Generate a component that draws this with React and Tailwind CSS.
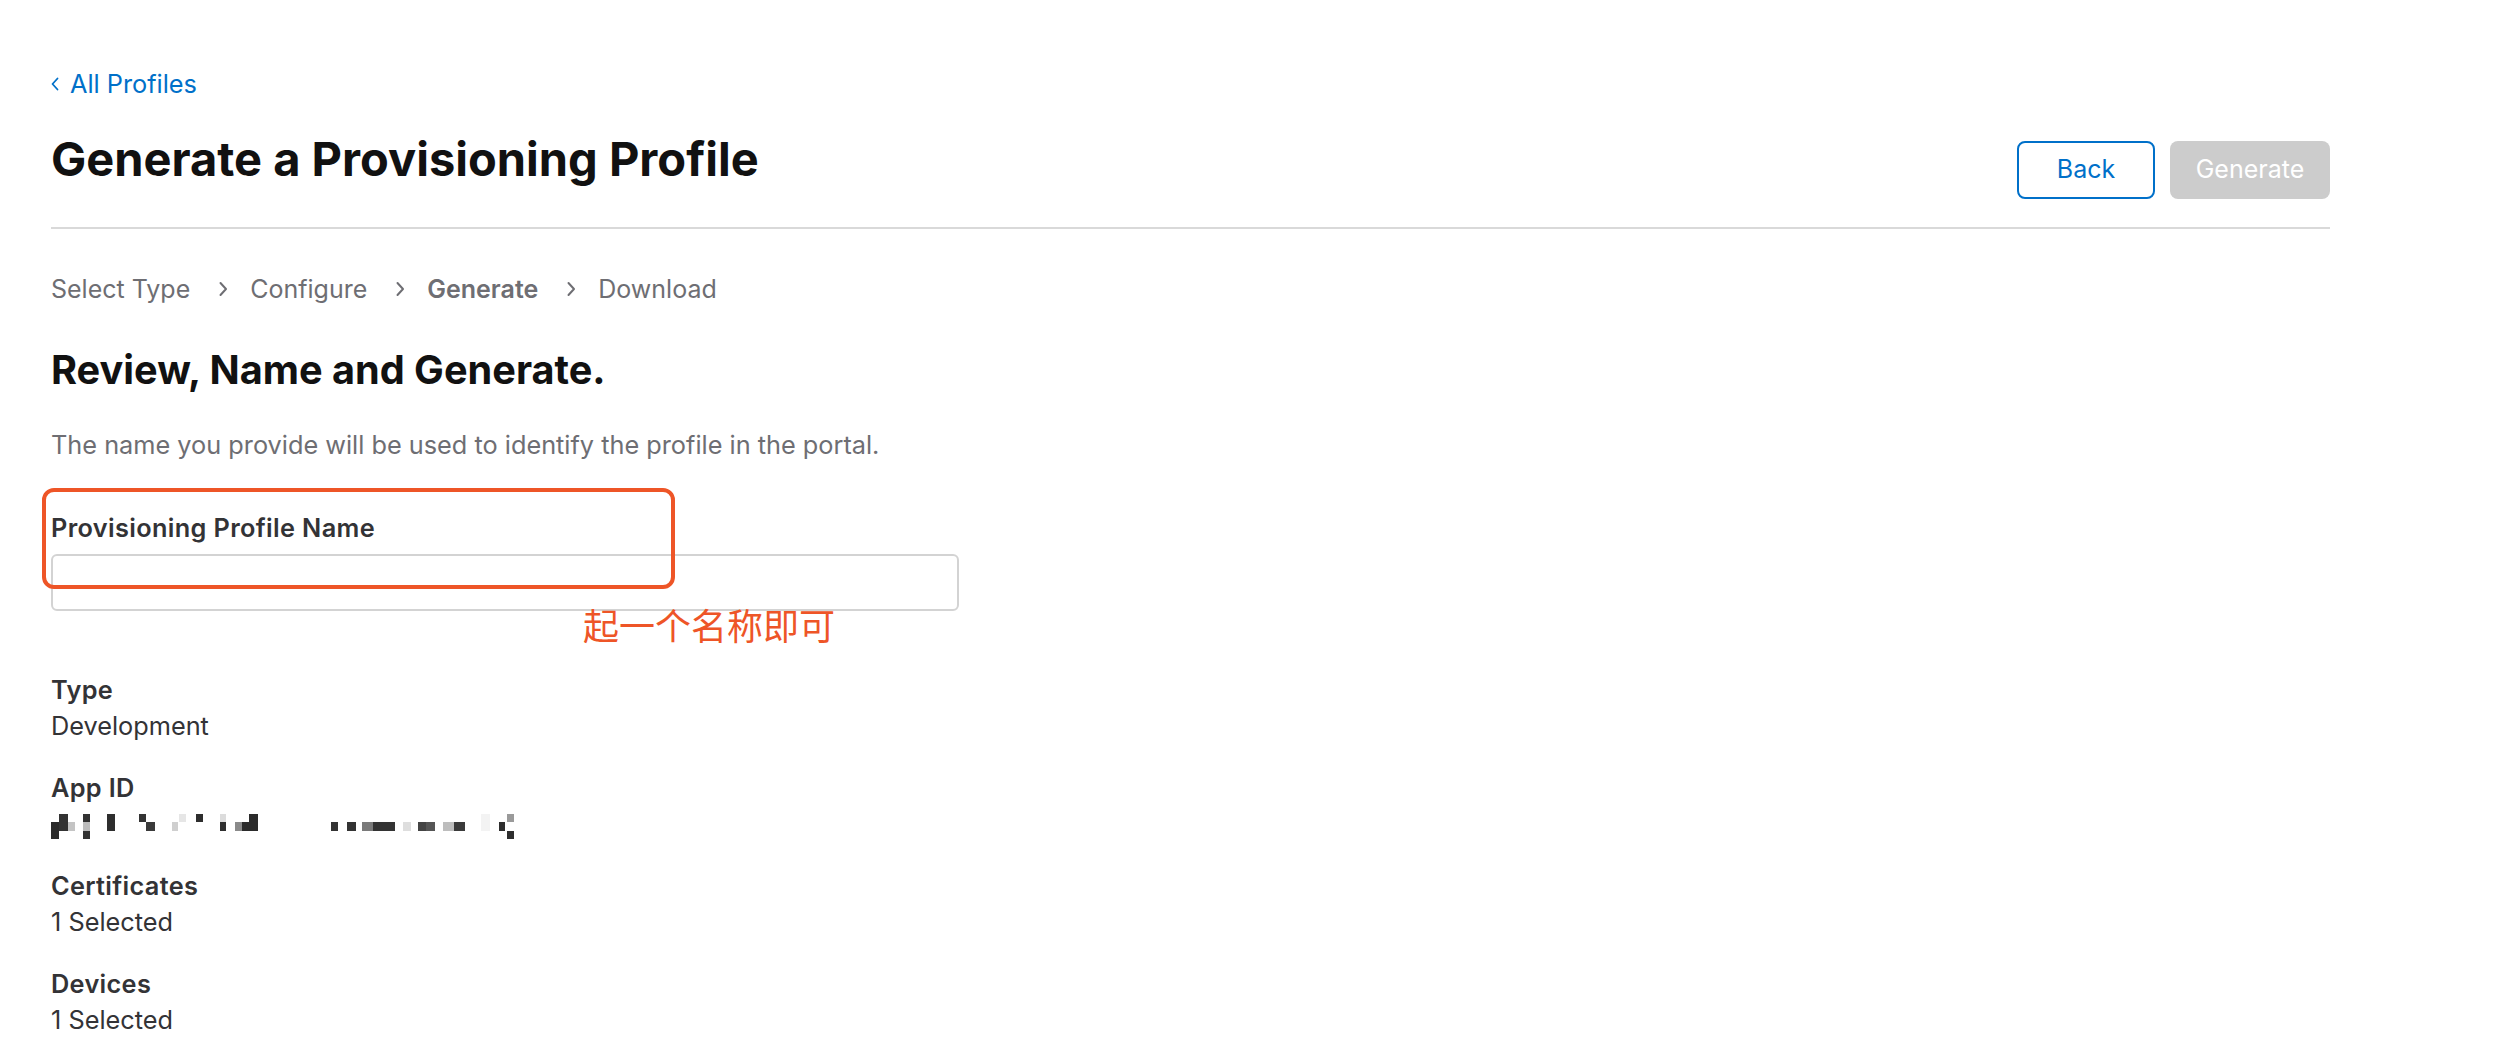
import React from 'react';

const steps = [
  { label: 'Select Type', current: false },
  { label: 'Configure', current: false },
  { label: 'Generate', current: true },
  { label: 'Download', current: false },
];

// blurred-out app id, drawn as blocks: [x, row, width, colour]
const blurBlocks = [
  [0, 1, 8, '#2b2b2b'], [0, 2, 8, '#2b2b2b'], [8, 0, 9, '#333'], [8, 1, 9, '#333'], [17, 1, 7, '#c4c4c4'],
  [32, 0, 7, '#333'], [32, 1, 7, '#bdbdbd'], [32, 2, 7, '#333'],
  [56, 0, 8, '#2e2e2e'], [56, 1, 8, '#2e2e2e'],
  [88, 0, 7, '#333'], [95, 1, 9, '#3a3a3a'],
  [121, 1, 6, '#cfcfcf'], [128, 0, 7, '#e6e6e6'], [145, 0, 7, '#2e2e2e'],
  [169, 0, 6, '#dcdcdc'], [169, 1, 6, '#2e2e2e'], [184, 1, 7, '#8a8a8a'], [191, 1, 7, '#2b2b2b'], [198, 0, 9, '#2b2b2b'], [198, 1, 9, '#2b2b2b'],
  [280, 1, 7, '#333'], [296, 1, 9, '#333'], [311, 1, 11, '#7a7a7a'], [322, 1, 22, '#333'],
  [352, 1, 8, '#dedede'], [367, 1, 8, '#444'], [375, 1, 9, '#555'], [392, 1, 11, '#bdbdbd'], [403, 1, 11, '#3a3a3a'],
  [430, 0, 9, '#f3f3f3'], [430, 1, 9, '#f3f3f3'], [448, 1, 6, '#2e2e2e'], [456, 0, 7, '#9a9a9a'], [456, 2, 7, '#2e2e2e'],
];

function BlurredId() {
  return (
    <svg width="466" height="26" viewBox="0 0 466 26" className="block">
      {blurBlocks.map(([x, row, w, c], i) => (
        <rect key={i} x={x} y={row * 8 + (row === 2 ? 1 : 0)} width={w} height={row === 1 ? 9 : 8} fill={c} />
      ))}
    </svg>
  );
}

function Chevron({ className }) {
  return (
    <svg width="10" height="16" viewBox="0 0 10 16" className={className} fill="none">
      <path d="M2.5 2 L8 8 L2.5 14" stroke="#6e6e73" strokeWidth="2" strokeLinecap="round" strokeLinejoin="round" />
    </svg>
  );
}

function Detail({ label, children }) {
  return (
    <div className="text-[25.3px] leading-[36px] text-[#333336]">
      <div className="font-semibold tracking-[0.013em]">{label}</div>
      <div className="h-[36px]">{children}</div>
    </div>
  );
}

export default function App() {
  return (
    <div className="min-h-screen bg-white font-['Inter',sans-serif] text-[#1d1d1f]">
      <div className="ml-[51px] w-[2279px] pt-[66px] pb-[20px]">
        <a href="#" className="flex items-center gap-[11px] text-[25.3px] leading-[36px] text-[#0070c9]">
          <svg width="8" height="14" viewBox="0 0 8 14" fill="none">
            <path d="M6.5 1.5 L1.5 7 L6.5 12.5" stroke="#0070c9" strokeWidth="1.8" strokeLinecap="round" strokeLinejoin="round" />
          </svg>
          All Profiles
        </a>

        <div className="mt-[30px] flex justify-between items-start">
          <h1 className="text-[47px] leading-[53px] font-bold text-[#111]">
            Generate a Provisioning Profile
          </h1>
          <div className="mt-[9px] flex gap-[15px]">
            <button className="w-[138px] h-[58px] rounded-[8px] border-2 border-[#0070c9] text-[25px] text-[#0070c9]">
              Back
            </button>
            <button className="w-[160px] h-[58px] rounded-[8px] bg-[#cccccc] text-[25px] text-white">
              Generate
            </button>
          </div>
        </div>

        <div className="mt-[28px] h-[2px] bg-[#d9d9d9]" />

        <div className="mt-[42px] flex items-center text-[25px] leading-[36px] text-[#6e6e73]">
          {steps.map((s, i) => (
            <div key={s.label} className="flex items-center">
              {i > 0 && <Chevron className="ml-[28px] mr-[22px]" />}
              <span className={s.current ? 'font-semibold' : ''}>{s.label}</span>
            </div>
          ))}
        </div>

        <h2 className="mt-[39px] text-[39.7px] leading-[48px] font-bold text-[#111]">
          Review, Name and Generate.
        </h2>

        <p className="mt-[33px] text-[25.3px] leading-[36px] text-[#6e6e73]">
          The name you provide will be used to identify the profile in the portal.
        </p>

        <div className="relative mt-[47px]">
          <label className="block text-[25.3px] leading-[36px] font-semibold tracking-[0.014em] text-[#333336]">
            Provisioning Profile Name
          </label>
          <input
            type="text"
            className="mt-[8px] block w-[908px] h-[57px] rounded-[6px] border-2 border-[#d3d3d3] px-[14px] text-[24px] outline-none"
          />
          <div className="absolute left-[-9px] top-[-22px] w-[633px] h-[101px] rounded-[12px] border-[4px] border-[#ee5527]" />
          <div className="absolute left-[532px] top-[96px] text-[36px] leading-[36px] text-[#ee5527] font-['Noto_Sans_CJK_SC',sans-serif] whitespace-nowrap">
            起一个名称即可
          </div>
        </div>

        <div className="mt-[61px] flex flex-col gap-[26px]">
          <Detail label="Type">Development</Detail>
          <Detail label="App ID">
            <div className="pt-[8px]">
              <BlurredId />
            </div>
          </Detail>
          <Detail label="Certificates">1 Selected</Detail>
          <Detail label="Devices">1 Selected</Detail>
        </div>
      </div>
    </div>
  );
}
